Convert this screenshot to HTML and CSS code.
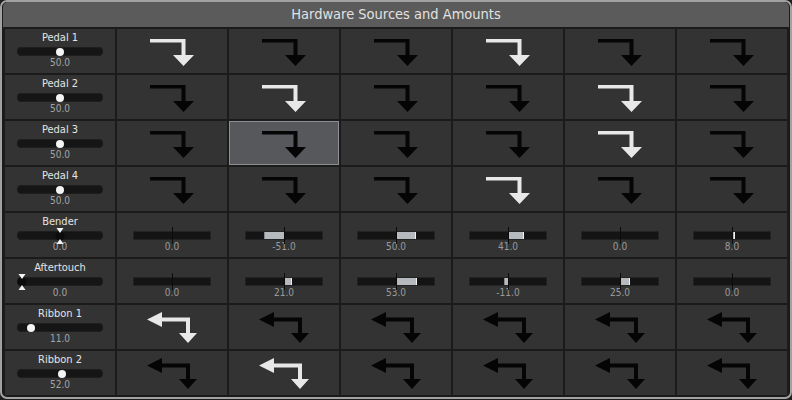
FILE: index.html
```html
<!DOCTYPE html>
<html>
<head>
<meta charset="utf-8">
<link rel="stylesheet" href="styles.css">
</head>
<body>
<svg class="defs" width="0" height="0" aria-hidden="true">
  <defs>
    <symbol id="pedal" viewBox="0 0 44 27"><path d="M0 0 H35.5 V16 H44 L33.5 27 L23 16 H31.5 V3.5 H0 Z"/></symbol>
    <symbol id="ribbon" viewBox="0 0 50 31"><path d="M0 7.5 L15 0 V5.5 H43 V21 H50 L41 31 L32 21 H39 V9.5 H15 V15 Z"/></symbol>
    <symbol id="cknob" viewBox="0 0 10 16"><circle cx="5" cy="8" r="4.5" fill="#0c0c0c"/><path d="M1.5 0 H8.5 L5 5 Z M1.5 16 H8.5 L5 11 Z" fill="#f2f2f2"/></symbol>
  </defs>
</svg>
<div class="frame">
  <div class="title">Hardware Sources and Amounts</div>
  <div class="grid">
    <!-- Pedal 1 -->
    <div class="cell src"><div class="lbl">Pedal 1</div><div class="track"><span class="knob" style="left:39px"></span></div><div class="val">50.0</div></div>
    <div class="cell arr on"><svg class="pd"><use href="#pedal"/></svg></div>
    <div class="cell arr"><svg class="pd"><use href="#pedal"/></svg></div>
    <div class="cell arr"><svg class="pd"><use href="#pedal"/></svg></div>
    <div class="cell arr on"><svg class="pd"><use href="#pedal"/></svg></div>
    <div class="cell arr"><svg class="pd"><use href="#pedal"/></svg></div>
    <div class="cell arr"><svg class="pd"><use href="#pedal"/></svg></div>
    <!-- Pedal 2 -->
    <div class="cell src"><div class="lbl">Pedal 2</div><div class="track"><span class="knob" style="left:39px"></span></div><div class="val">50.0</div></div>
    <div class="cell arr"><svg class="pd"><use href="#pedal"/></svg></div>
    <div class="cell arr on"><svg class="pd"><use href="#pedal"/></svg></div>
    <div class="cell arr"><svg class="pd"><use href="#pedal"/></svg></div>
    <div class="cell arr"><svg class="pd"><use href="#pedal"/></svg></div>
    <div class="cell arr on"><svg class="pd"><use href="#pedal"/></svg></div>
    <div class="cell arr"><svg class="pd"><use href="#pedal"/></svg></div>
    <!-- Pedal 3 -->
    <div class="cell src"><div class="lbl">Pedal 3</div><div class="track"><span class="knob" style="left:39px"></span></div><div class="val">50.0</div></div>
    <div class="cell arr"><svg class="pd"><use href="#pedal"/></svg></div>
    <div class="cell arr sel"><svg class="pd"><use href="#pedal"/></svg></div>
    <div class="cell arr"><svg class="pd"><use href="#pedal"/></svg></div>
    <div class="cell arr"><svg class="pd"><use href="#pedal"/></svg></div>
    <div class="cell arr on"><svg class="pd"><use href="#pedal"/></svg></div>
    <div class="cell arr"><svg class="pd"><use href="#pedal"/></svg></div>
    <!-- Pedal 4 -->
    <div class="cell src"><div class="lbl">Pedal 4</div><div class="track"><span class="knob" style="left:39px"></span></div><div class="val">50.0</div></div>
    <div class="cell arr"><svg class="pd"><use href="#pedal"/></svg></div>
    <div class="cell arr"><svg class="pd"><use href="#pedal"/></svg></div>
    <div class="cell arr"><svg class="pd"><use href="#pedal"/></svg></div>
    <div class="cell arr on"><svg class="pd"><use href="#pedal"/></svg></div>
    <div class="cell arr"><svg class="pd"><use href="#pedal"/></svg></div>
    <div class="cell arr"><svg class="pd"><use href="#pedal"/></svg></div>
    <!-- Bender -->
    <div class="cell src"><div class="lbl">Bender</div><div class="track"><svg class="cknob" style="left:38px"><use href="#cknob"/></svg></div><div class="val">0.0</div></div>
    <div class="cell amt"><div class="bar"></div><div class="val">0.0</div></div>
    <div class="cell amt"><div class="bar"><span class="fill neg" style="left:19px;width:20px"></span></div><div class="val">-51.0</div></div>
    <div class="cell amt"><div class="bar"><span class="fill pos" style="left:39px;width:19.5px"></span></div><div class="val">50.0</div></div>
    <div class="cell amt"><div class="bar"><span class="fill pos" style="left:39px;width:16px"></span></div><div class="val">41.0</div></div>
    <div class="cell amt"><div class="bar"></div><div class="val">0.0</div></div>
    <div class="cell amt"><div class="bar"><span class="fill pos" style="left:39px;width:3px"></span></div><div class="val">8.0</div></div>
    <!-- Aftertouch -->
    <div class="cell src"><div class="lbl">Aftertouch</div><div class="track"><svg class="cknob" style="left:0px"><use href="#cknob"/></svg></div><div class="val">0.0</div></div>
    <div class="cell amt"><div class="bar"></div><div class="val">0.0</div></div>
    <div class="cell amt"><div class="bar"><span class="fill pos" style="left:39px;width:8px"></span></div><div class="val">21.0</div></div>
    <div class="cell amt"><div class="bar"><span class="fill pos" style="left:39px;width:21px"></span></div><div class="val">53.0</div></div>
    <div class="cell amt"><div class="bar"><span class="fill neg" style="left:35px;width:4px"></span></div><div class="val">-11.0</div></div>
    <div class="cell amt"><div class="bar"><span class="fill pos" style="left:39px;width:10px"></span></div><div class="val">25.0</div></div>
    <div class="cell amt"><div class="bar"></div><div class="val">0.0</div></div>
    <!-- Ribbon 1 -->
    <div class="cell src"><div class="lbl">Ribbon 1</div><div class="track"><span class="knob" style="left:9.5px"></span></div><div class="val">11.0</div></div>
    <div class="cell arr on"><svg class="rb"><use href="#ribbon"/></svg></div>
    <div class="cell arr"><svg class="rb"><use href="#ribbon"/></svg></div>
    <div class="cell arr"><svg class="rb"><use href="#ribbon"/></svg></div>
    <div class="cell arr"><svg class="rb"><use href="#ribbon"/></svg></div>
    <div class="cell arr"><svg class="rb"><use href="#ribbon"/></svg></div>
    <div class="cell arr"><svg class="rb"><use href="#ribbon"/></svg></div>
    <!-- Ribbon 2 -->
    <div class="cell src"><div class="lbl">Ribbon 2</div><div class="track"><span class="knob" style="left:40.5px"></span></div><div class="val">52.0</div></div>
    <div class="cell arr"><svg class="rb"><use href="#ribbon"/></svg></div>
    <div class="cell arr on"><svg class="rb"><use href="#ribbon"/></svg></div>
    <div class="cell arr"><svg class="rb"><use href="#ribbon"/></svg></div>
    <div class="cell arr"><svg class="rb"><use href="#ribbon"/></svg></div>
    <div class="cell arr"><svg class="rb"><use href="#ribbon"/></svg></div>
    <div class="cell arr"><svg class="rb"><use href="#ribbon"/></svg></div>
  </div>
</div>
</body>
</html>
```

FILE: styles.css
```css
html, body {
  margin: 0;
  padding: 0;
  background: #1e1e1e;
}
body {
  width: 792px;
  height: 400px;
  font-family: "DejaVu Sans Condensed", "DejaVu Sans", sans-serif;
  font-stretch: condensed;
}
.defs {
  position: absolute;
  width: 0;
  height: 0;
}
.frame {
  width: 792px;
  height: 399px;
  box-sizing: border-box;
  border: 2px solid #a2a2a2;
  border-radius: 7px;
  background: #1b1b1b;
  overflow: hidden;
  display: flex;
  flex-direction: column;
}
.title {
  height: 25px;
  margin: 0 1px;
  background: #5b5b5b;
  color: #e2e2e2;
  font-size: 14.5px;
  line-height: 25px;
  text-align: center;
  border-radius: 5px 5px 0 0;
}
.grid {
  display: grid;
  grid-template-columns: repeat(7, 110px);
  grid-template-rows: repeat(8, 44px);
  gap: 2px;
  padding: 2px 3px;
}
.cell {
  background: #333333;
  box-sizing: border-box;
}
.src, .amt {
  display: flex;
  flex-direction: column;
  align-items: center;
}
.src {
  padding-top: 3px;
}
.lbl {
  color: #e4e4e4;
  font-size: 11px;
  line-height: 12px;
  height: 12px;
}
.track {
  position: relative;
  margin-top: 3px;
  width: 86px;
  height: 9px;
  border-radius: 5px;
  background: #151515;
  box-shadow: inset 0 0 0 1px #1e1e1e;
}
.knob {
  position: absolute;
  top: 0.5px;
  width: 8px;
  height: 8px;
  border-radius: 50%;
  background: #f4f4f4;
}
.cknob {
  position: absolute;
  top: -3.5px;
  width: 10px;
  height: 16px;
}
.val {
  margin-top: 2px;
  color: #a3a3a3;
  font-size: 10px;
  line-height: 10px;
  height: 10px;
}
.amt {
  padding-top: 18px;
}
.amt .val {
  color: #9a9a9a;
}
.bar {
  position: relative;
  width: 78px;
  height: 9px;
  box-sizing: border-box;
  background: #141414;
  border: 1px solid #232323;
}
.bar::after {
  content: "";
  position: absolute;
  left: 38px;
  top: -5px;
  bottom: -5px;
  width: 1px;
  background: #0b0b0b;
}
.fill {
  position: absolute;
  top: 0;
  bottom: 0;
  margin-left: -1px;
  box-sizing: border-box;
  background: #b6b9bd;
}
.fill.pos {
  border-right: 1px solid #f0f0f0;
}
.fill.neg {
  border-left: 1px solid #85888c;
}
.arr {
  display: flex;
  align-items: center;
  justify-content: center;
  color: #050505;
}
.arr.on {
  color: #e8e8e8;
}
.arr.sel {
  background: #56585c;
  border: 1px solid #8c8e92;
}
.arr svg {
  fill: currentColor;
}
.pd {
  width: 44px;
  height: 27px;
  margin-top: 3px;
}
.rb {
  width: 50px;
  height: 31px;
}
```
